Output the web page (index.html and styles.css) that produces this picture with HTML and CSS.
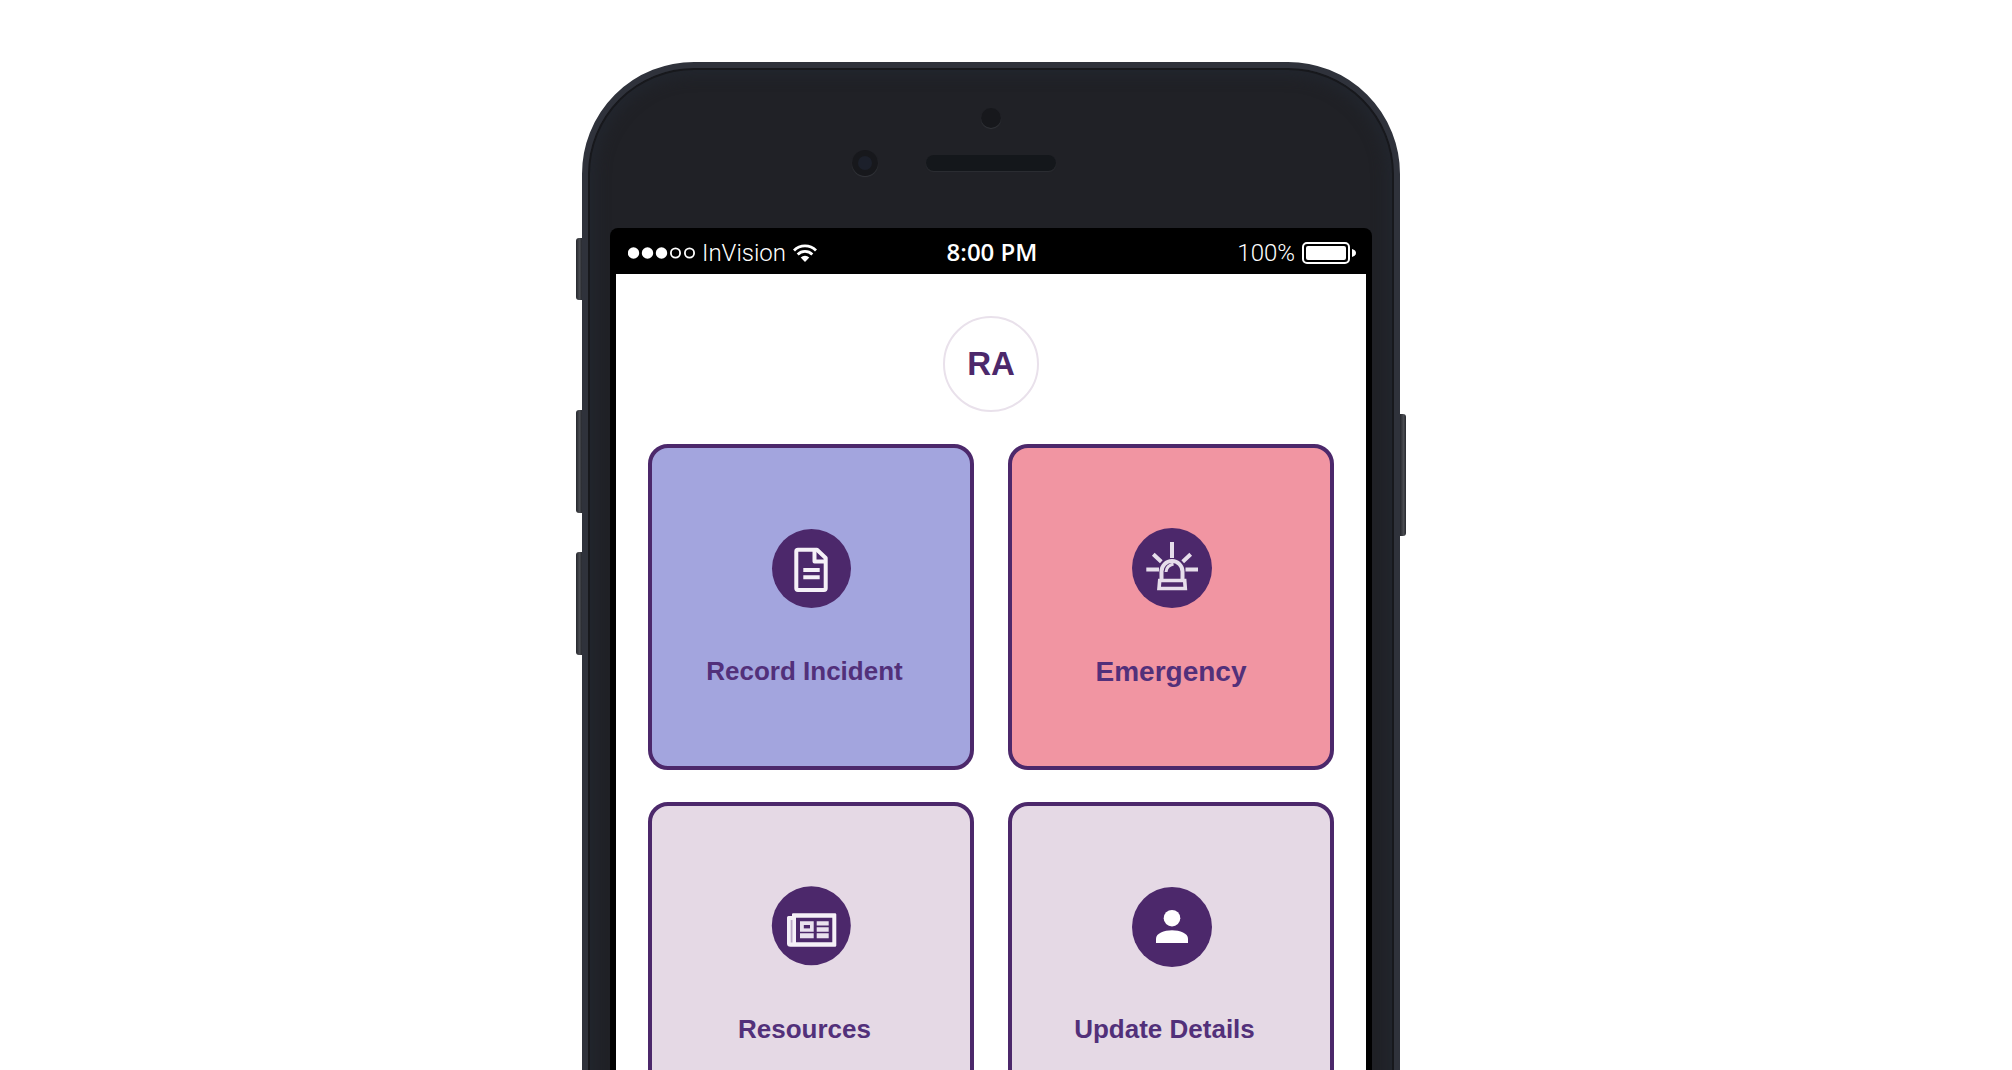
FILE: index.html
```
<!DOCTYPE html>
<html lang="en">
<head>
<meta charset="utf-8">
<meta name="viewport" content="width=device-width, initial-scale=1">
<title>Home</title>
<link rel="stylesheet" href="styles.css">
</head>
<body>
<div class="stage">
  <div class="phone">
    <span class="side-key key-mute"></span>
    <span class="side-key key-up"></span>
    <span class="side-key key-down"></span>
    <span class="side-key key-power"></span>
    <div class="phone-top">
      <span class="sensor"></span>
      <div class="ear-row">
        <span class="camera"></span>
        <span class="speaker"></span>
      </div>
    </div>
    <div class="bezel">
      <header class="status-bar">
        <div class="carrier">
          <svg class="signal" width="67" height="12" viewBox="0 0 67 12" aria-hidden="true">
            <g fill="#fff"><circle cx="5.500" cy="6" r="5.700"/><circle cx="19.500" cy="6" r="5.700"/><circle cx="33.500" cy="6" r="5.700"/></g>
            <g fill="none" stroke="#fff" stroke-width="1.800"><circle cx="47.500" cy="6" r="4.600"/><circle cx="61.500" cy="6" r="4.600"/></g>
          </svg>
          <span>InVision</span>
          <svg width="24" height="18" viewBox="0 0 24 18" aria-hidden="true">
            <g fill="none" stroke="#fff" stroke-width="2.800"><path d="M1 6.400a15.500 15.500 0 0 1 22 0"/><path d="M4.700 10.500a10.300 10.300 0 0 1 14.600 0"/></g>
            <path d="M7.700 13.600a6.100 6.100 0 0 1 8.600 0L12 18z" fill="#fff"/>
          </svg>
        </div>
        <time class="clock">8:00 PM</time>
        <div class="battery">
          <span>100%</span>
          <svg width="54" height="22" viewBox="0 0 54 22" aria-hidden="true">
            <rect x="1" y="1" width="46" height="20" rx="4" fill="none" stroke="#fff" stroke-width="2"/>
            <rect x="4" y="4" width="40" height="14" rx="2" fill="#fff"/>
            <path d="M50 7q4 1 4 4t-4 4z" fill="#fff"/>
          </svg>
        </div>
      </header>
      <main class="screen">
        <div class="avatar">RA</div>
        <nav class="tiles">
          <button type="button" class="tile tile-record">
            <svg width="80" height="80" viewBox="0 0 80 80" aria-hidden="true">
              <circle cx="40.500" cy="40.500" r="39.500" fill="#4c286b"/>
              <g fill="none" stroke="#f5f0f7" stroke-width="4" stroke-linejoin="round">
                <path d="M27 21.700h19L54.700 30v30.300q0 1.700-1.700 1.700H27q-1.700 0-1.700-1.700V23.400q0-1.700 1.700-1.700z"/>
                <path d="M43.500 22v11.500H54"/>
                <path d="M32.300 42h16.400M32.300 49.300h16.400"/>
              </g>
            </svg>
            <span class="label">Record Incident</span>
          </button>
          <button type="button" class="tile tile-emergency">
            <svg width="80" height="80" viewBox="-1 0 80 80" aria-hidden="true" overflow="visible">
              <circle cx="40" cy="40" r="40" fill="#4c286b"/>
              <g fill="none" stroke="#e6deeb" stroke-width="4">
                <path d="M40 14v16M14.300 41.500H27M53.500 41.500H66M21.300 26.300l8 7.400M58.700 26.300l-8 7.400"/>
                <path d="M29.500 52V43.500a10.500 10.500 0 0 1 21 0V52"/>
                <path d="M34 44q.5-6.500 7.500-8" stroke-width="3"/>
                <path d="M27.700 52.500h25l.6 8H27z" stroke-width="3.600"/>
              </g>
            </svg>
            <span class="label label-large">Emergency</span>
          </button>
          <button type="button" class="tile">
            <svg width="80" height="80" viewBox="0 0 80 80" aria-hidden="true">
              <circle cx="40.300" cy="39.700" r="39.500" fill="#4c286b"/>
              <path d="M22 27.300h42q1.300 0 1.300 1.300v30.800q0 1.300-1.300 1.300H19.500Q16 60.700 16 57.500V31.500q0-1.500 1.500-1.500H21v-1.500q0-1.200 1-1.200z" fill="#f5f0f7"/>
              <path d="M25 31.700h36.300v24.600H25z" fill="#4c286b"/>
              <path d="M20.600 34v22.500" stroke="#b9a6c6" stroke-width="1.800"/>
              <path d="M29 35.200h13.700v10.500H29zM29 47.300h13.700v5H29zM45.700 35.200h12v4.400h-12zM45.700 41.200h12v4.500h-12zM45.700 47.300h12v5h-12z" fill="#e9e1ee"/>
              <path d="M32.800 39h6.200v3.400h-6.200z" fill="#4c286b"/>
            </svg>
            <span class="label">Resources</span>
          </button>
          <button type="button" class="tile">
            <svg width="80" height="80" viewBox="-1 -1 80 80" aria-hidden="true" overflow="visible">
              <circle cx="40" cy="40" r="40" fill="#4c286b"/>
              <circle cx="40" cy="31.200" r="8.300" fill="#fff"/>
              <path d="M24 56V51.500C24 46.500 32 43.300 40 43.300S56 46.500 56 51.500V56z" fill="#fff"/>
            </svg>
            <span class="label">Update Details</span>
          </button>
        </nav>
      </main>
    </div>
  </div>
</div>
</body>
</html>
```
FILE: styles.css
```
* {
  box-sizing: border-box;
}

body {
  margin: 0;
  background: #fff;
  font-family: "Liberation Sans", Arial, sans-serif;
}

.stage {
  display: flex;
  justify-content: center;
  align-items: flex-start;
  height: 100vh;
  padding: 62px 30px 0 0;
  overflow: hidden;
}

/* Device shell */
.phone {
  position: relative;
  flex: none;
  width: 818px;
  max-width: 100%;
  padding: 0 22px 180px;
  border: 6px solid #2f323b;
  border-radius: 112px;
  background: #202126;
  box-shadow: inset 0 0 0 2px #17181c, inset 0 0 14px 8px #22262e;
}

.side-key {
  position: absolute;
  left: -12px;
  width: 6px;
  height: 103px;
  border-radius: 3px 0 0 3px;
  background: linear-gradient(90deg, #25272d, #4a4c51 60%, #25272d);
}

.key-mute {
  top: 170px;
  height: 62px;
}

.key-up {
  top: 342px;
}

.key-down {
  top: 484px;
}

.key-power {
  top: 346px;
  right: -12px;
  left: auto;
  height: 122px;
  border-radius: 0 3px 3px 0;
}

.phone-top {
  display: flex;
  flex-direction: column;
  align-items: center;
  gap: 22px;
  height: 160px;
  padding-top: 40px;
}

.sensor {
  width: 20px;
  height: 20px;
  border-radius: 50%;
  background: #17181c;
  box-shadow: 0 1px 1px #34363b;
}

.ear-row {
  display: grid;
  grid-template-columns: 26px 130px 26px;
  align-items: center;
  gap: 48px;
}

.camera {
  width: 26px;
  height: 26px;
  border: 6px solid #17181c;
  border-radius: 50%;
  background: #1c202b;
  box-shadow: 0 1px 1px #34363b;
}

.speaker {
  height: 16px;
  border-radius: 8px;
  background: #14171b;
  box-shadow: 0 1px 1px #2c2e33;
}

.bezel {
  padding: 0 6px 6px;
  border-radius: 8px;
  background: #000;
}

/* Status bar */
.status-bar {
  display: grid;
  grid-template-columns: 1fr auto 1fr;
  align-items: center;
  height: 46px;
  padding: 4px 10px 0 12px;
  color: #fff;
  font-family: Roboto, "Liberation Sans", sans-serif;
  font-size: 24px;
  font-weight: 300;
  line-height: 32px;
}

.carrier,
.battery {
  display: flex;
  align-items: center;
  gap: 7px;
}

.battery {
  justify-content: flex-end;
}

.clock {
  font-family: "Open Sans", "Noto Sans", sans-serif;
  font-weight: 600;
  line-height: 30px;
  padding-bottom: 2px;
}

/* Home screen */
.screen {
  padding: 42px 32px;
  background: #fff;
  color: #4c286b;
}

.avatar {
  display: flex;
  align-items: center;
  justify-content: center;
  width: 96px;
  height: 96px;
  margin: 0 auto 32px;
  border: 2px solid #e9e1eb;
  border-radius: 50%;
  font-size: 33px;
  font-weight: bold;
}

.tiles {
  display: grid;
  grid-template-columns: 1fr 1fr;
  gap: 32px 34px;
}

.tile {
  display: flex;
  flex-direction: column;
  align-items: center;
  justify-content: flex-start;
  gap: 47px;
  aspect-ratio: 1;
  padding: 80px 0 0;
  border: 4px solid #4c286b;
  border-radius: 20px;
  background: #e5d9e5;
  color: #52307a;
  font: bold 26px/32px "Liberation Sans", Arial, sans-serif;
}

.tile-record {
  background: #a3a5de;
}

.tile-emergency {
  background: #f195a2;
}

.label {
  padding-right: 13px;
}

.label-large {
  padding-right: 0;
  font-size: 28px;
  line-height: 34px;
}
```
